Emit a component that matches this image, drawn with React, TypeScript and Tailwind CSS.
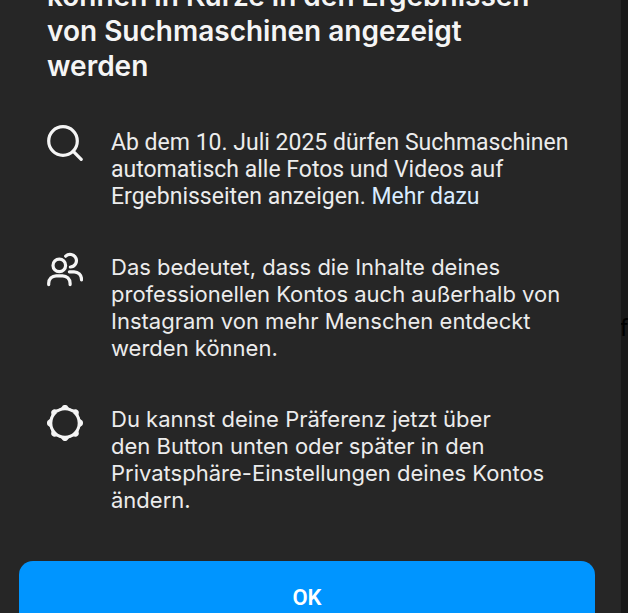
import type { ReactNode } from "react";

type InfoRowProps = {
  icon: ReactNode;
  children: ReactNode;
  className: string;
};

function SearchIcon() {
  return (
    <svg viewBox="0 0 36 40" className="h-10 w-9" fill="none" stroke="currentColor" strokeWidth="3.2" aria-hidden="true">
      <circle cx="16" cy="16" r="14.3" />
      <path d="M26.3 26.3 34.2 34.4" strokeLinecap="round" />
    </svg>
  );
}

function PeopleIcon() {
  return (
    <svg viewBox="0 -2 36 40" className="h-10 w-9" fill="none" stroke="currentColor" strokeWidth="3.2" strokeLinecap="round" aria-hidden="true">
      <circle cx="12.3" cy="13.4" r="6.3" />
      <path d="M1.7 32.6v-1.4a7.4 7.4 0 0 1 7.4-7.4h6.6a7.4 7.4 0 0 1 7.4 7.4v1.4" />
      <path d="M18.7 4.2a6.3 6.3 0 1 1 4.6 10.8" />
      <path d="M22.4 19.8h4.7a7.4 7.4 0 0 1 7.4 7.4v.6" />
    </svg>
  );
}

function SettingsIcon() {
  return (
    <svg viewBox="0 -3 36 40" className="h-10 w-9" fill="currentColor" aria-hidden="true">
      <circle cx="18" cy="18" r="15.6" />
      {[0, 45, 90, 135, 180, 225, 270, 315].map((angle) => (
        <path
          key={angle}
          transform={`rotate(${angle} 18 18)`}
          d="M12 3.5C14.2 3 14.6 2.2 15.3 1.2C16 0.2 16.8 0 18 0C19.2 0 20 0.2 20.7 1.2C21.4 2.2 21.8 3 24 3.5L22 7H14Z"
        />
      ))}
      <circle cx="18" cy="18" r="12.7" fill="#262626" />
    </svg>
  );
}

function InfoRow({ icon, children, className }: InfoRowProps) {
  return (
    <li className="flex items-start gap-7">
      <span className="-mt-1 shrink-0 text-[#f5f5f5]">{icon}</span>
      <p className={className}>{children}</p>
    </li>
  );
}

export default function App() {
  return (
    <div className="relative h-screen overflow-hidden bg-[#191919] pr-[7px]">
      <span className="absolute top-[312px] right-0 font-['Roboto',sans-serif] text-2xl text-black">
        f
      </span>
      <main className="relative flex min-h-full flex-col bg-[#262626] text-[#ececec]">
        <h1 className="-mt-[21px] pr-6 pl-[47px] font-['Inter',sans-serif] text-[28px] leading-[35px] font-semibold text-[#f5f5f5]">
          können in Kürze in den Ergebnissen
          <br />
          von Suchmaschinen angezeigt
          <br />
          werden
        </h1>
        <ul className="mt-[45px] flex flex-col gap-11 pr-6 pl-[47px]">
          <InfoRow
            icon={<SearchIcon />}
            className="font-['Roboto',sans-serif] text-[23px] leading-[27px]"
          >
            Ab dem 10. Juli 2025 dürfen Suchmaschinen
            <br />
            automatisch alle Fotos und Videos auf
            <br />
            Ergebnisseiten anzeigen.{" "}
            <a href="#" className="text-[#d9ecff]">
              Mehr dazu
            </a>
          </InfoRow>
          <InfoRow
            icon={<PeopleIcon />}
            className="font-['Inter',sans-serif] text-[22px] leading-[27px]"
          >
            Das bedeutet, dass die Inhalte deines
            <br />
            professionellen Kontos auch außerhalb von
            <br />
            Instagram von mehr Menschen entdeckt
            <br />
            werden können.
          </InfoRow>
          <InfoRow
            icon={<SettingsIcon />}
            className="font-['Inter',sans-serif] text-[22px] leading-[27px]"
          >
            Du kannst deine Präferenz jetzt über
            <br />
            den Button unten oder später in den
            <br />
            Privatsphäre-Einstellungen deines Kontos
            <br />
            ändern.
          </InfoRow>
        </ul>
        <button
          type="button"
          className="mt-[47px] mr-[26px] ml-[19px] h-[72px] rounded-[14px] bg-[#0095ff] font-['Roboto',sans-serif] text-[22px] font-semibold text-white"
        >
          OK
        </button>
      </main>
    </div>
  );
}
